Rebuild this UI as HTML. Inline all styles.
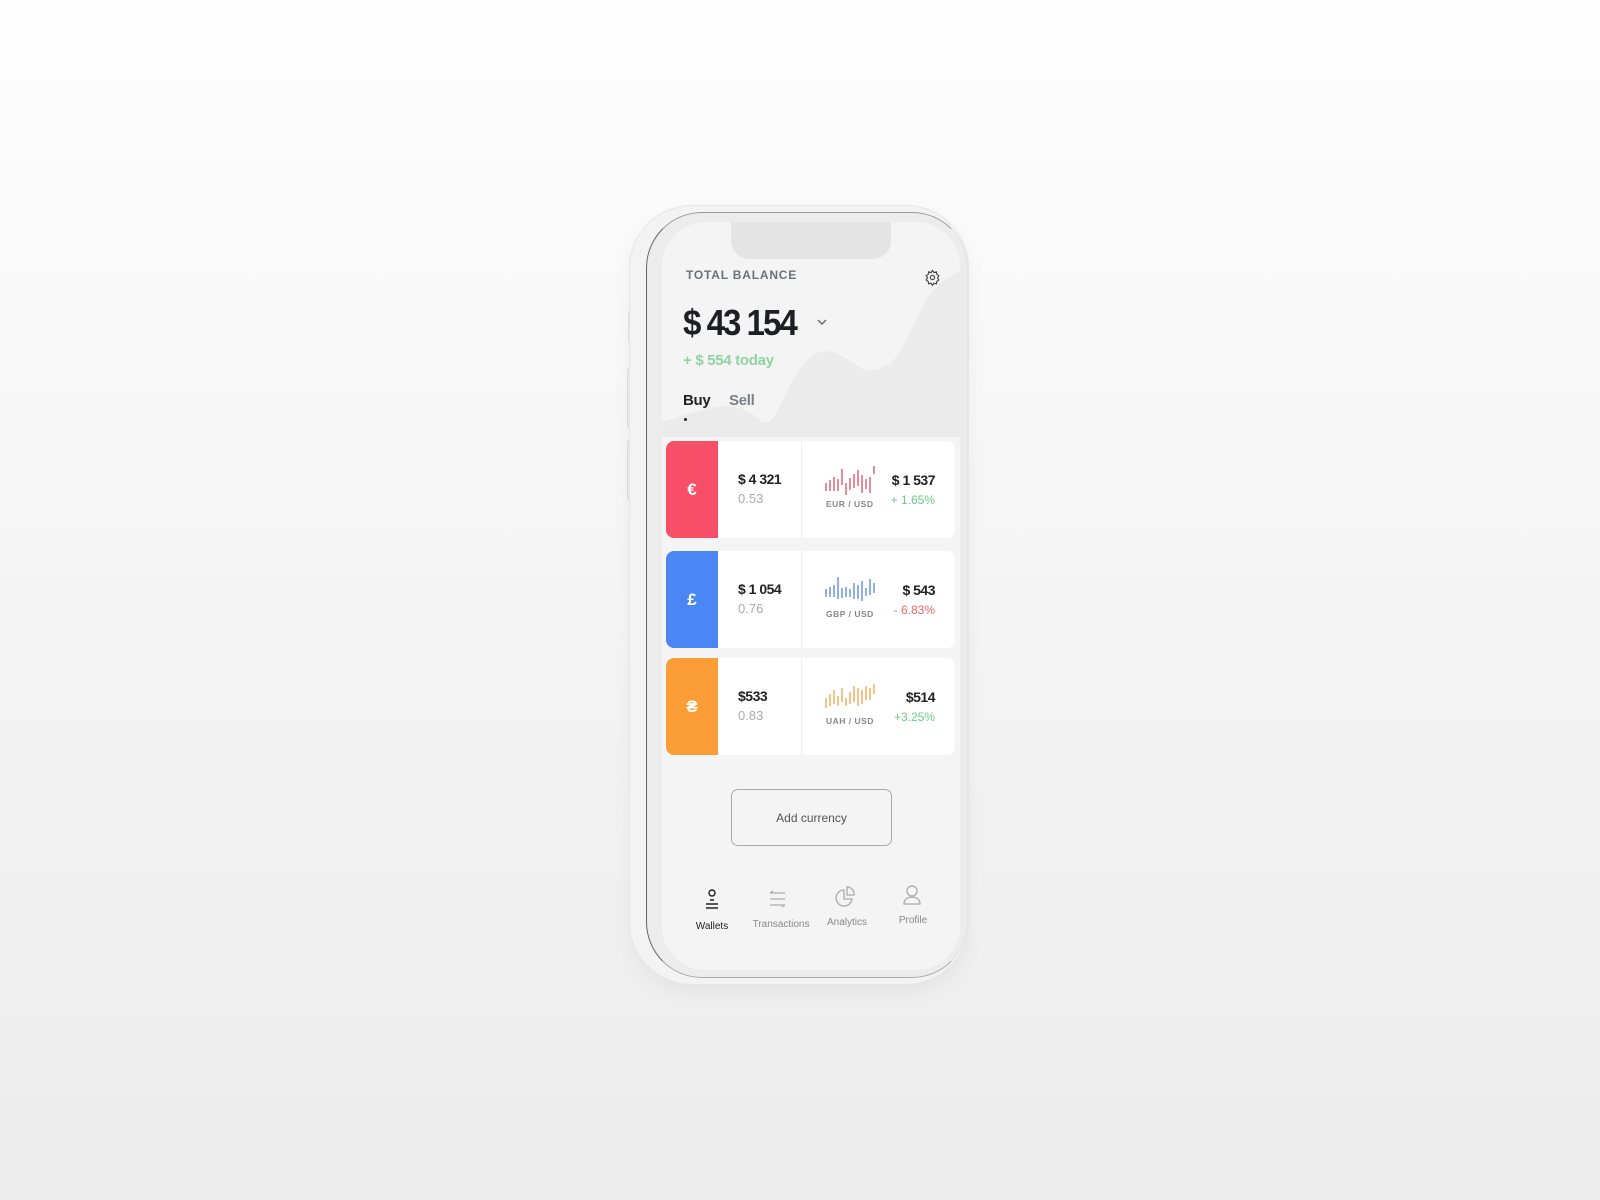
<!DOCTYPE html>
<html><head><meta charset="utf-8"><style>
*{margin:0;padding:0;box-sizing:border-box}
body{width:1600px;height:1200px;overflow:hidden;background:linear-gradient(#fefefe 0%,#f6f6f6 40%,#ececec 100%);font-family:"Liberation Sans",sans-serif;position:relative}
.abs{position:absolute}
.phone{left:630px;top:206px;width:338px;height:778px;border-radius:62px;background:#f3f3f3;box-shadow:0 0 0 1px #e6e6e6,0 8px 20px rgba(0,0,0,.05)}
.bezel{left:646px;top:212px;width:322px;height:766px;border-radius:56px;border:1.5px solid #666;border-right-color:#e2e2e2;border-top-color:#999;border-bottom-color:#aaa;background:#ececec}
.screen{left:662px;top:222px;width:298px;height:748px;border-radius:44px;background:#f4f4f4;overflow:hidden}
.notch{left:731px;top:222px;width:160px;height:37px;background:#e4e4e4;border-radius:0 0 18px 18px}
.card{position:absolute;left:666px;width:289px;height:97px;background:#fff;border-radius:8px;overflow:hidden}
.card .c{position:absolute;left:0;top:0;width:52px;height:100%;color:#fff;font-weight:bold;font-size:17px;display:flex;align-items:center;justify-content:center}
.card .div{position:absolute;left:135px;top:0;width:1px;height:100%;background:#eee}
.amt{position:absolute;left:72px;top:30px;font-weight:bold;font-size:14px;color:#222;letter-spacing:-.5px}
.sub{position:absolute;left:72px;top:50px;font-size:13px;color:#aaa}
.pair{position:absolute;left:160px;top:58px;font-size:8.5px;font-weight:bold;color:#888;letter-spacing:.5px}
.r1{position:absolute;right:20px;top:31px;font-weight:bold;font-size:14px;color:#222;letter-spacing:-.5px}
.r2{position:absolute;right:20px;top:52px;font-size:12px}
.bars{position:absolute;left:158px;top:24px}
.nav{position:absolute;font-size:10px;color:#888;text-align:center;width:80px}
</style></head><body>
<div class="abs" style="left:628px;top:310px;width:6px;height:34px;background:#e4e4e4;border-radius:3px"></div>
<div class="abs" style="left:628px;top:368px;width:6px;height:60px;background:#eee;border-radius:3px;box-shadow:0 0 0 1px #ddd"></div>
<div class="abs" style="left:628px;top:440px;width:6px;height:60px;background:#eee;border-radius:3px;box-shadow:0 0 0 1px #ddd"></div>
<div class="abs phone"></div>
<div class="abs bezel"></div>
<div class="abs screen">
<svg width="298" height="748" style="position:absolute;left:0;top:0">
<path d="M0 200 C40 190 70 170 100 200 C120 210 130 120 170 130 C200 140 200 160 230 140 C250 120 260 60 298 50 L298 215 L0 215 Z" fill="#ebebeb"/>
<rect x="0" y="215" width="298" height="533" fill="#f4f4f4"/>
</svg>
</div>
<div class="abs notch"></div>
<div class="abs" style="left:686px;top:268px;font-size:12px;font-weight:bold;color:#6c7078;letter-spacing:.8px">TOTAL BALANCE</div>
<svg class="abs" style="left:924px;top:269px" width="17" height="17" viewBox="0 0 24 24" fill="none" stroke="#444" stroke-width="1.6"><circle cx="12" cy="12" r="3"/><path d="M12 2l2 3 3.5-1 .5 3.5 3 2-2 3 2 3-3 2-.5 3.5-3.5-1-2 3-2-3-3.5 1-.5-3.5-3-2 2-3-2-3 3-2 .5-3.5 3.5 1z"/></svg>
<div class="abs" style="left:683px;top:302px;font-size:36px;font-weight:bold;color:#1e1f22;letter-spacing:-2.2px;transform:scaleX(.92);transform-origin:left">$ 43 154</div>
<svg class="abs" style="left:817px;top:319px" width="10" height="7"><path d="M1 1l4 4 4-4" stroke="#666" stroke-width="1.4" fill="none"/></svg>
<div class="abs" style="left:683px;top:352px;font-size:15px;font-weight:bold;color:#8fd49f;letter-spacing:-.3px">+ $ 554 today</div>
<div class="abs" style="left:683px;top:392px;font-size:15px;font-weight:bold;color:#222;letter-spacing:-.3px">Buy</div>
<div class="abs" style="left:729px;top:392px;font-size:15px;font-weight:bold;color:#7a7f88;letter-spacing:-.3px">Sell</div>
<div class="abs" style="left:684px;top:418px;width:3px;height:3px;border-radius:50%;background:#222"></div>

<div class="card" style="top:441px"><div class="c" style="background:#f64f67">€</div><div class="div"></div>
<div class="amt">$ 4 321</div><div class="sub">0.53</div>
<svg class="bars" width="54" height="32" stroke="#e06478" stroke-width="1.5"><path d="M2 18v8M6 15v11M10 12v14M14 14v12M18 4v16M22 18v12M26 13v12M30 9v14M34 5v16M38 10v18M42 14v10M46 12v16M50 1v8"/></svg>
<div class="pair">EUR / USD</div><div class="r1">$ 1 537</div><div class="r2" style="color:#6dcb85">+ 1.65%</div></div>

<div class="card" style="top:551px"><div class="c" style="background:#4a86f4">£</div><div class="div"></div>
<div class="amt">$ 1 054</div><div class="sub">0.76</div>
<svg class="bars" width="54" height="32" stroke="#6a95e0" stroke-width="1.5"><path d="M2 14v8M6 12v10M10 10v12M14 2v22M18 13v10M22 12v10M26 14v8M30 8v16M34 10v14M38 6v20M42 13v8M46 4v16M50 8v10"/></svg>
<div class="pair">GBP / USD</div><div class="r1">$ 543</div><div class="r2" style="color:#ef6868">- 6.83%</div></div>

<div class="card" style="top:658px"><div class="c" style="background:#fb9d36">₴</div><div class="div"></div>
<div class="amt">$533</div><div class="sub">0.83</div>
<svg class="bars" width="54" height="32" stroke="#f3ae5c" stroke-width="1.5"><path d="M2 16v10M6 12v12M10 8v14M14 14v10M18 6v14M22 16v8M26 10v12M30 4v16M34 6v18M38 8v14M42 4v14M46 6v12M50 2v10"/></svg>
<div class="pair">UAH / USD</div><div class="r1">$514</div><div class="r2" style="color:#6dcb85">+3.25%</div></div>

<div class="abs" style="left:731px;top:789px;width:161px;height:57px;border:1px solid #aaa;border-radius:7px;display:flex;align-items:center;justify-content:center;font-size:12px;color:#555">Add currency</div>

<svg class="abs" style="left:703px;top:889px" width="18" height="24" stroke="#222" stroke-width="1.4" fill="none"><circle cx="9" cy="4" r="3"/><path d="M7 11h4M3 15h12M3 19h12"/></svg>
<div class="nav" style="left:672px;top:921px;color:#222">Wallets</div>
<svg class="abs" style="left:766px;top:888px" width="22" height="22" stroke="#aaa" stroke-width="1.3" fill="none"><path d="M4 5h15M4 5l3-2M4 11h15M4 17h15M19 17l-3 2"/></svg>
<div class="nav" style="left:741px;top:919px">Transactions</div>
<svg class="abs" style="left:835px;top:886px" width="22" height="22" stroke="#aaa" stroke-width="1.3" fill="none"><path d="M9 4a8 8 0 1 0 8 9H9z"/><path d="M12 1v8h7a7 7 0 0 0-7-8z"/></svg>
<div class="nav" style="left:807px;top:917px">Analytics</div>
<svg class="abs" style="left:902px;top:884px" width="20" height="22" stroke="#aaa" stroke-width="1.3" fill="none"><circle cx="10" cy="7" r="5"/><path d="M2 20c0-5 4-7 8-7s8 2 8 7z"/></svg>
<div class="nav" style="left:873px;top:915px">Profile</div>
</body></html>
